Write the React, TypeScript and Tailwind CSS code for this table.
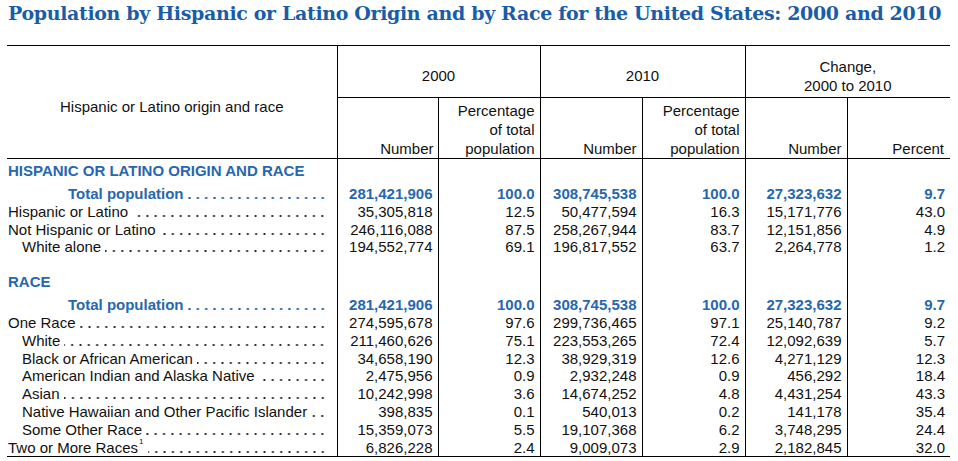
import React from "react";

type Row = {
  label: string;
  level: 0 | 1 | 2;
  vals: string[];
  total?: boolean;
  note?: string;
};

const hispanic: Row[] = [
  { label: "Total population", level: 2, total: true, vals: ["281,421,906", "100.0", "308,745,538", "100.0", "27,323,632", "9.7"] },
  { label: "Hispanic or Latino", level: 0, vals: ["35,305,818", "12.5", "50,477,594", "16.3", "15,171,776", "43.0"] },
  { label: "Not Hispanic or Latino", level: 0, vals: ["246,116,088", "87.5", "258,267,944", "83.7", "12,151,856", "4.9"] },
  { label: "White alone", level: 1, vals: ["194,552,774", "69.1", "196,817,552", "63.7", "2,264,778", "1.2"] },
];

const race: Row[] = [
  { label: "Total population", level: 2, total: true, vals: ["281,421,906", "100.0", "308,745,538", "100.0", "27,323,632", "9.7"] },
  { label: "One Race", level: 0, vals: ["274,595,678", "97.6", "299,736,465", "97.1", "25,140,787", "9.2"] },
  { label: "White", level: 1, vals: ["211,460,626", "75.1", "223,553,265", "72.4", "12,092,639", "5.7"] },
  { label: "Black or African American", level: 1, vals: ["34,658,190", "12.3", "38,929,319", "12.6", "4,271,129", "12.3"] },
  { label: "American Indian and Alaska Native", level: 1, vals: ["2,475,956", "0.9", "2,932,248", "0.9", "456,292", "18.4"] },
  { label: "Asian", level: 1, vals: ["10,242,998", "3.6", "14,674,252", "4.8", "4,431,254", "43.3"] },
  { label: "Native Hawaiian and Other Pacific Islander", level: 1, vals: ["398,835", "0.1", "540,013", "0.2", "141,178", "35.4"] },
  { label: "Some Other Race", level: 1, vals: ["15,359,073", "5.5", "19,107,368", "6.2", "3,748,295", "24.4"] },
  { label: "Two or More Races", note: "1", level: 0, vals: ["6,826,228", "2.4", "9,009,073", "2.9", "2,182,845", "32.0"] },
];

function DataRow({ row, last }: { row: Row; last?: boolean }) {
  const indent = row.level === 2 ? "pl-[61px]" : row.level === 1 ? "pl-[15px]" : "pl-[1px]";
  const tone = row.total ? "text-[#2767ad] font-bold" : "text-[#111]";
  const leader = row.total
    ? "bg-[radial-gradient(circle,#2767ad_0.9px,transparent_1.4px)]"
    : "bg-[radial-gradient(circle,#222_0.8px,transparent_1.3px)]";
  return (
    <tr className={`h-[17.8px] leading-[17.8px] ${last ? "border-b border-black" : ""}`}>
      <td className={`${indent} pr-[10px] p-0 ${tone}`}>
        <div className="flex whitespace-nowrap">
          <span className="shrink-0">
            {row.label}
            {row.note && <sup className="text-[8px] ml-[1px] align-[5px]">{row.note}</sup>}
          </span>
          <span
            className={`flex-1 ml-[4px] h-[17.8px] ${leader} bg-[length:8.33px_4px] bg-repeat-x bg-[position:right_0_top_11px]`}
          ></span>
        </div>
      </td>
      {row.vals.map((v, i) => (
        <td key={i} className={`border-l border-black text-right pr-[5px] p-0 ${tone}`}>
          {v}
        </td>
      ))}
    </tr>
  );
}

function SectionRow({ title, spaced }: { title: string; spaced?: boolean }) {
  return (
    <>
      {spaced && (
        <tr className="h-[14px]">
          <td className="p-0"></td>
          {[0, 1, 2, 3, 4, 5].map((i) => (
            <td key={i} className="border-l border-black p-0"></td>
          ))}
        </tr>
      )}
      <tr className="h-[26px]">
        <td className="pl-[1px] pt-[3px] pb-[5px] leading-[18px] font-bold text-[#2767ad] whitespace-nowrap">
          {title}
        </td>
        {[0, 1, 2, 3, 4, 5].map((i) => (
          <td key={i} className="border-l border-black p-0"></td>
        ))}
      </tr>
    </>
  );
}

export default function App() {
  return (
    <div className="w-[958px] h-[461px] bg-white overflow-hidden font-['Liberation_Sans',Arial,sans-serif] text-[15px]">
      <h1 className="pl-[8px] pt-[1px] h-[45px] font-['DejaVu_Serif',serif] font-bold text-[19px] tracking-[-0.35px] leading-[24px] text-[#1a5da6] whitespace-nowrap">
        Population by Hispanic or Latino Origin and by Race for the United States: 2000 and 2010
      </h1>
      <table className="ml-[7px] w-[943px] table-fixed border-collapse border-t border-black">
        <colgroup>
          <col className="w-[330px]" />
          <col className="w-[101px]" />
          <col className="w-[102px]" />
          <col className="w-[102px]" />
          <col className="w-[103px]" />
          <col className="w-[102px]" />
          <col className="w-[103px]" />
        </colgroup>
        <thead className="text-[#111] font-normal">
          <tr className="h-[52px] leading-[19px]">
            <th rowSpan={2} className="font-normal align-middle pt-[9px] text-center border-b border-black">
              Hispanic or Latino origin and race
            </th>
            <th colSpan={2} className="font-normal border-l border-b border-black pt-2 text-center">
              2000
            </th>
            <th colSpan={2} className="font-normal border-l border-b border-black pt-2 text-center">
              2010
            </th>
            <th colSpan={2} className="font-normal border-l border-b border-black pt-2 text-center">
              Change,
              <br />
              2000 to 2010
            </th>
          </tr>
          <tr className="h-[61px] leading-[19px]">
            <th className="font-normal border-l border-b border-black align-bottom text-right pr-[4px]">Number</th>
            <th className="font-normal border-l border-b border-black align-bottom text-right pr-[5px]">
              Percentage
              <br />
              of total
              <br />
              population
            </th>
            <th className="font-normal border-l border-b border-black align-bottom text-right pr-[5px]">Number</th>
            <th className="font-normal border-l border-b border-black align-bottom text-right pr-[5px]">
              Percentage
              <br />
              of total
              <br />
              population
            </th>
            <th className="font-normal border-l border-b border-black align-bottom text-right pr-[5px]">Number</th>
            <th className="font-normal border-l border-b border-black align-bottom text-right pr-[6px]">Percent</th>
          </tr>
        </thead>
        <tbody>
          <SectionRow title="HISPANIC OR LATINO ORIGIN AND RACE" />
          {hispanic.map((r, i) => (
            <DataRow key={"h" + i} row={r} />
          ))}
          <SectionRow title="RACE" spaced />
          {race.map((r, i) => (
            <DataRow key={"r" + i} row={r} last={i === race.length - 1} />
          ))}
        </tbody>
      </table>
    </div>
  );
}
